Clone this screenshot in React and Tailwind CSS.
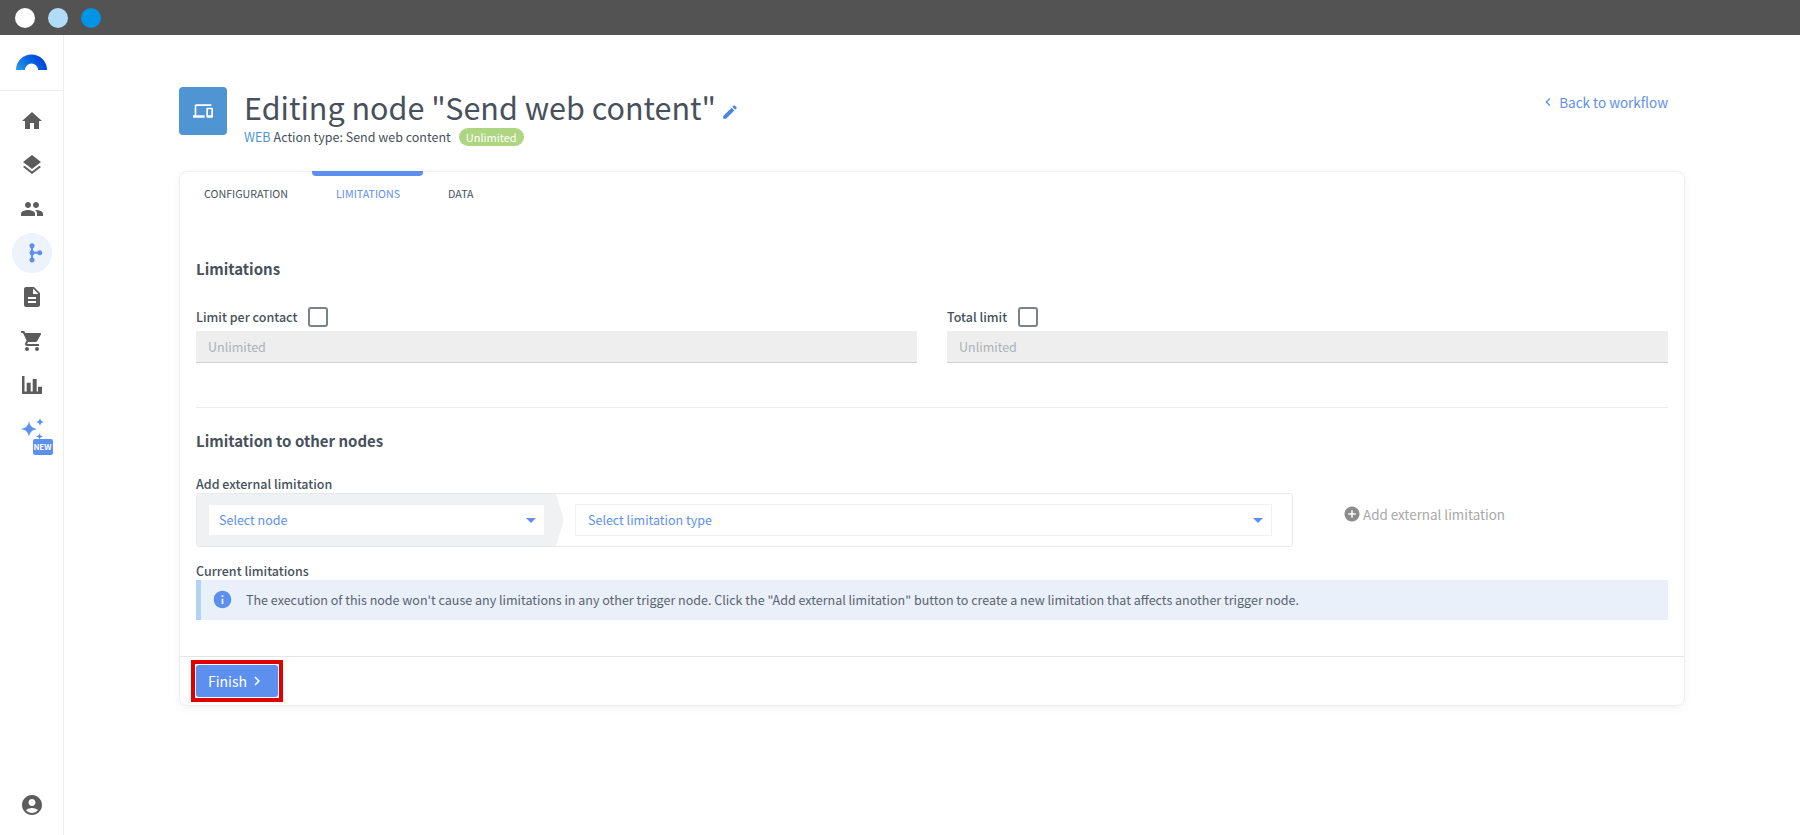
import React from "react";
import {
  MdHome,
  MdLayers,
  MdPeople,
  MdDescription,
  MdShoppingCart,
  MdAccountCircle,
  MdEdit,
  MdDevices,
  MdInfo,
  MdAddCircle,
  MdChevronRight,
  MdChevronLeft,
} from "react-icons/md";

const Logo = () => (
  <svg width="31" height="16" viewBox="0 0 31 16">
    <defs>
      <linearGradient id="logoFill" x1="0" y1="1" x2="1" y2="0.6">
        <stop offset="0" stopColor="#2f9be8" />
        <stop offset="0.5" stopColor="#0a6fe0" />
        <stop offset="1" stopColor="#0040d8" />
      </linearGradient>
    </defs>
    <path d="M0 16A15.500 15.500 0 0 1 31 16H22A6.500 6.500 0 0 0 9 16Z" fill="url(#logoFill)" />
  </svg>
);

const BranchIcon = () => (
  <svg width="24" height="24" viewBox="0 0 24 24" fill="#5c8fee">
    <rect x="11" y="4" width="2" height="15" />
    <rect x="12" y="10.700" width="8" height="2" />
    <circle cx="12" cy="4.700" r="2.500" />
    <circle cx="12" cy="11.700" r="2.500" />
    <circle cx="12" cy="19" r="2.500" />
    <circle cx="19.700" cy="11.700" r="2.500" />
  </svg>
);

const ChartIcon = () => (
  <svg width="24" height="24" viewBox="0 0 24 24" fill="#5c5c5c">
    <path d="M2 3h2.500v15.500H22V21H2z" />
    <path d="M6.700 9.700h4V19h-4zM12.700 6h4v13h-4zM18 13.700h4V19h-4z" />
  </svg>
);

const Star = ({ size }) => (
  <svg width={size} height={size} viewBox="0 0 24 24" fill="#5c8fee">
    <path d="M12 0c1.200 7.200 4.800 10.800 12 12-7.200 1.200-10.800 4.800-12 12-1.200-7.200-4.800-10.800-12-12 7.200-1.200 10.800-4.800 12-12z" />
  </svg>
);

const SparkleIcon = () => (
  <div className="relative h-[37px] w-[32px]">
    <span className="absolute left-0 top-[3px]">
      <Star size={16} />
    </span>
    <span className="absolute left-[15px] top-0">
      <Star size={8} />
    </span>
    <span className="absolute left-[15px] top-[15px]">
      <Star size={7} />
    </span>
    <span className="absolute left-[12px] top-[21px] flex h-[16px] w-[20px] items-center justify-center rounded-[2px] bg-[#5c8fee] text-[8px] font-bold leading-none text-white">
      NEW
    </span>
  </div>
);

const navIcons = [
  <MdHome size={24} />,
  <MdLayers size={24} />,
  <MdPeople size={24} />,
  <BranchIcon />,
  <MdDescription size={24} />,
  <MdShoppingCart size={24} />,
  <ChartIcon />,
];

const Sidebar = () => (
  <aside className="flex w-[64px] shrink-0 flex-col border-r border-[#eceef0] text-[#5c5c5c]">
    <div className="flex h-[56px] items-center justify-center border-b border-[#eceef0] pb-[1px]">
      <Logo />
    </div>
    <nav className="flex flex-col items-center gap-[4px] pt-[10px]">
      {navIcons.map((icon, i) => (
        <div
          key={i}
          className={`flex h-[40px] w-[40px] items-center justify-center rounded-full ${
            i === 3 ? "bg-[#edf3fc]" : ""
          }`}
        >
          {icon}
        </div>
      ))}
      <div className="ml-[10px] mt-[9px]">
        <SparkleIcon />
      </div>
    </nav>
    <div className="mt-auto flex justify-center pb-[18px]">
      <MdAccountCircle size={24} />
    </div>
  </aside>
);

const LimitField = ({ label }) => (
  <div className="flex-1">
    <div className="flex h-[20px] items-center gap-[11px] text-[12.5px] font-medium text-[#47515c]">
      <span className="pt-[1px]">{label}</span>
      <span className="h-[20px] w-[20px] rounded-[3px] border-2 border-[#7b8188] bg-white" />
    </div>
    <div className="mt-[4px] flex h-[32px] items-center border-b border-[#cfd2d8] bg-[#eeeeee] px-[12px] pt-[1px] text-[12.5px] text-[#aeb1b5]">
      Unlimited
    </div>
  </div>
);

const SelectBox = ({ text, className }) => (
  <div
    className={`flex h-[32px] items-center justify-between border border-[#eff0f2] bg-white pr-[8px] text-[12.5px] text-[#5c8fee] ${className}`}
  >
    <span>{text}</span>
    <span className="h-0 w-0 border-x-[5px] border-t-[5px] border-x-transparent border-t-[#5c8fee]" />
  </div>
);

export default function App() {
  return (
    <div
      className="flex h-[835px] flex-col overflow-hidden bg-white"
      style={{ fontFamily: '"Noto Sans CJK JP", "Noto Sans", sans-serif' }}
    >
      {/* Window bar */}
      <div className="flex h-[35px] shrink-0 items-center gap-[13px] bg-[#535353] pl-[15px]">
        <span className="h-[20px] w-[20px] rounded-full bg-white" />
        <span className="h-[20px] w-[20px] rounded-full bg-[#b0dcf8]" />
        <span className="h-[20px] w-[20px] rounded-full bg-[#0094e6]" />
      </div>

      <div className="flex min-h-0 flex-1">
        <Sidebar />

        <main className="flex-1 pl-[115px] pr-[115px] pt-[52px]">
          {/* Header */}
          <div className="flex justify-between">
            <div className="flex gap-[17px]">
              <div className="flex h-[48px] w-[48px] items-center justify-center rounded-[4px] bg-[#4f95d4] text-white">
                <MdDevices size={20} />
              </div>
              <div>
                <div className="flex h-[40px] items-center gap-[5px] text-[30.5px] font-normal leading-[40px] text-[#47515c]">
                  <span>Editing node "Send web content"</span>
                  <MdEdit size={18} className="mt-[9px] text-[#4c86e0]" />
                </div>
                <div className="mt-[1px] flex items-center text-[12.5px] leading-[18px] text-[#47515c]">
                  <span className="text-[#4f95d4]">WEB</span>
                  <span className="ml-[3px]">Action type: Send web content</span>
                  <span className="ml-[8px] flex h-[18px] items-center rounded-full bg-[#aed581] px-[7px] text-[11px] text-white">
                    Unlimited
                  </span>
                </div>
              </div>
            </div>
            <div className="mr-[17px] mt-[5px] flex h-[20px] items-center gap-[3px] text-[13.5px] text-[#5c8fee]">
              <MdChevronLeft size={16} />
              <span>Back to workflow</span>
            </div>
          </div>

          {/* Card */}
          <section className="mt-[25px] flex h-[535px] w-[1506px] flex-col rounded-[8px] border border-[#eceef0] shadow-[0_2px_8px_rgba(0,0,0,0.05)]">
            <div className="relative flex h-[44px] pl-[24px] text-[10.7px] uppercase leading-none text-[#47515c]">
              <span className="mr-[48px] mt-[17px]">Configuration</span>
              <span className="relative mr-[48px] mt-[17px] text-[#5c8fee]">
                Limitations
                <span className="absolute -left-[24px] -right-[23px] -top-[18px] h-[5px] rounded-b-[4px] bg-[#5c8fee]" />
              </span>
              <span className="mt-[17px]">Data</span>
            </div>

            <div className="flex-1 px-[16px]">
              <h2 className="mt-[41px] text-[15px] font-semibold leading-[24px] text-[#47515c]">Limitations</h2>
              <div className="mt-[26px] flex gap-[30px]">
                <LimitField label="Limit per contact" />
                <LimitField label="Total limit" />
              </div>
              <div className="mt-[44px] border-t border-[#eceef0]" />
              <h2 className="mt-[21px] text-[15px] font-semibold leading-[24px] text-[#47515c]">
                Limitation to other nodes
              </h2>
              <div className="mt-[22px] text-[12.5px] font-medium leading-[18px] text-[#47515c]">
                Add external limitation
              </div>

              <div className="flex items-center">
                <div className="flex h-[54px] w-[1097px] items-center overflow-hidden rounded-[3px] border border-[#e8e9eb]">
                  <div className="relative flex h-full w-[359px] items-center bg-[#f0f1f3] pl-[11px]">
                    <SelectBox text="Select node" className="w-[337px] pl-[10px]" />
                    <span className="absolute left-full top-0 h-0 w-0 border-y-[26px] border-l-[8px] border-y-transparent border-l-[#f0f1f3]" />
                  </div>
                  <SelectBox text="Select limitation type" className="ml-[19px] w-[697px] pl-[12px]" />
                </div>
                <div className="mb-[12px] ml-[50px] flex items-center gap-[2px] text-[13.4px] text-[#a8a8a8]">
                  <MdAddCircle size={18} className="text-[#8c8c8c]" />
                  <span>Add external limitation</span>
                </div>
              </div>

              <div className="mt-[15px] text-[12.5px] font-medium leading-[18px] text-[#47515c]">
                Current limitations
              </div>
              <div className="flex h-[40px] items-center border-l-[5px] border-[#b5d0f5] bg-[#e9f0fa] pl-[12px] text-[12.53px] text-[#5a636d]">
                <MdInfo size={21} className="-ml-[1px] -mt-[2px] text-[#5c8fee]" />
                <span className="ml-[13px] pt-[1px]">
                  The execution of this node won't cause any limitations in any other trigger node. Click the "Add
                  external limitation" button to create a new limitation that affects another trigger node.
                </span>
              </div>
            </div>

            {/* Footer */}
            <div className="flex h-[49px] items-center border-t border-[#e4e5e7] pl-[11px]">
              <div className="border-[4px] border-[#e00000] p-[1px]">
                <button className="flex h-[32px] w-[82px] items-center gap-[1px] rounded-[3px] bg-[#5c8fee] pl-[12px] text-[14px] text-white">
                  <span>Finish</span>
                  <MdChevronRight size={18} />
                </button>
              </div>
            </div>
          </section>
        </main>
      </div>
    </div>
  );
}
